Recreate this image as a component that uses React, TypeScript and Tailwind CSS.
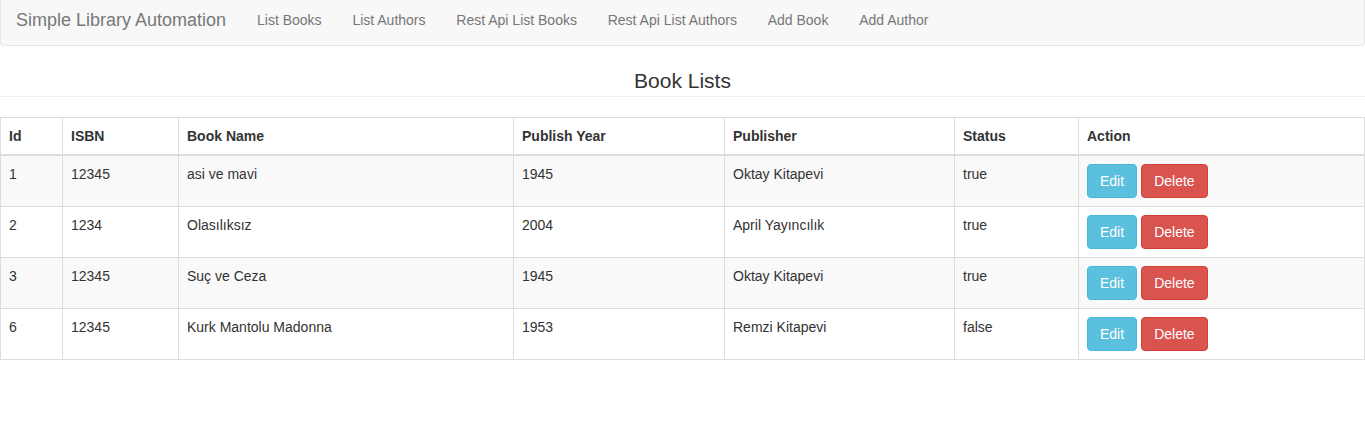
import React from "react";

const books = [
  { id: "1", isbn: "12345", name: "asi ve mavi", year: "1945", publisher: "Oktay Kitapevi", status: "true" },
  { id: "2", isbn: "1234", name: "Olasılıksız", year: "2004", publisher: "April Yayıncılık", status: "true" },
  { id: "3", isbn: "12345", name: "Suç ve Ceza", year: "1945", publisher: "Oktay Kitapevi", status: "true" },
  { id: "6", isbn: "12345", name: "Kurk Mantolu Madonna", year: "1953", publisher: "Remzi Kitapevi", status: "false" },
];

const links = ["List Books", "List Authors", "Rest Api List Books", "Rest Api List Authors", "Add Book", "Add Author"];

export default function App() {
  return (
    <div className="w-[1365px] min-h-[425px] bg-white text-[#333] text-[14px] leading-[20px]" style={{ fontFamily: '"Liberation Sans", Arial, Helvetica, sans-serif' }}>
      <nav className="h-[46px] bg-[#f8f8f8] border-x border-b border-[#e7e7e7] rounded-b-[4px] flex items-center">
        <span className="pl-[15px] pr-[15.5px] text-[18px] text-[#777] leading-[20px] mt-[-6px]">Simple Library Automation</span>
        <ul className="flex mt-[-6px]">
          {links.map((l) => (
            <li key={l} className="px-[15.4px] text-[#777]">{l}</li>
          ))}
        </ul>
      </nav>
      <div className="pt-[23px] pb-[3px] border-b border-[#eee] text-center">
        <h3 className="text-[21px] leading-[24px] font-normal">Book Lists</h3>
      </div>
      <table className="mt-[20px] w-[1365px] table-fixed border-collapse border border-[#ddd]">
        <colgroup>
          <col className="w-[62px]" />
          <col className="w-[116px]" />
          <col className="w-[335px]" />
          <col className="w-[211px]" />
          <col className="w-[230px]" />
          <col className="w-[124px]" />
          <col />
        </colgroup>
        <thead>
          <tr>
            {["Id", "ISBN", "Book Name", "Publish Year", "Publisher", "Status", "Action"].map((h) => (
              <th key={h} className="text-left font-bold px-[8px] py-[8px] border border-[#ddd] border-b-2 align-bottom">{h}</th>
            ))}
          </tr>
        </thead>
        <tbody>
          {books.map((b, i) => (
            <tr key={b.id} className={i % 2 === 0 ? "bg-[#f9f9f9]" : "bg-white"}>
              <td className="p-[8px] border border-[#ddd] align-top">{b.id}</td>
              <td className="p-[8px] border border-[#ddd] align-top">{b.isbn}</td>
              <td className="p-[8px] border border-[#ddd] align-top">{b.name}</td>
              <td className="p-[8px] border border-[#ddd] align-top">{b.year}</td>
              <td className="p-[8px] border border-[#ddd] align-top">{b.publisher}</td>
              <td className="p-[8px] border border-[#ddd] align-top">{b.status}</td>
              <td className="p-[8px] border border-[#ddd] align-top">
                <div className="flex gap-[4px]">
                  <button className="h-[34px] px-[12px] text-white bg-[#5bc0de] border border-[#46b8da] rounded-[4px] leading-[20px]">Edit</button>
                  <button className="h-[34px] px-[12px] text-white bg-[#d9534f] border border-[#d43f3a] rounded-[4px] leading-[20px]">Delete</button>
                </div>
              </td>
            </tr>
          ))}
        </tbody>
      </table>
    </div>
  );
}
